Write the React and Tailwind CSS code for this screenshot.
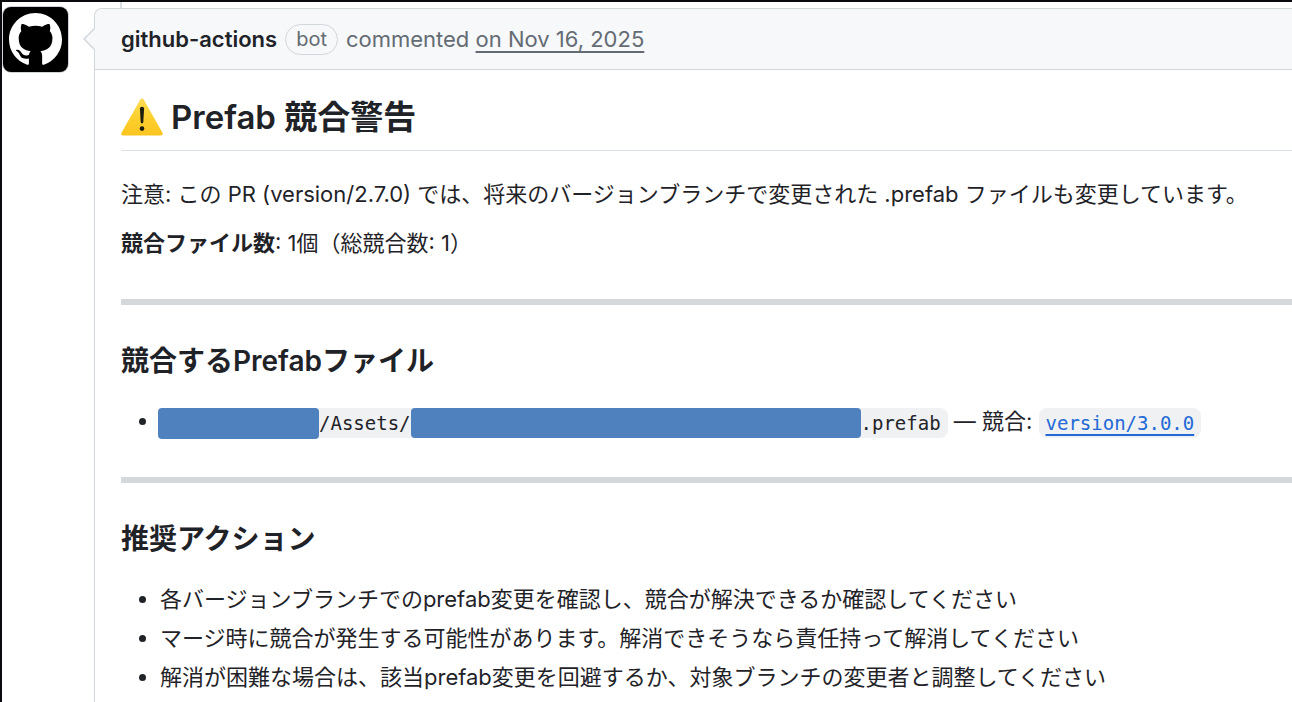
const actions = [
  '各バージョンブランチでのprefab変更を確認し、競合が解決できるか確認してください',
  'マージ時に競合が発生する可能性があります。解消できそうなら責任持って解消してください',
  '解消が困難な場合は、該当prefab変更を回避するか、対象ブランチの変更者と調整してください',
];

function Avatar() {
  return (
    <a
      href="#github-actions"
      aria-label="github-actions"
      className="mt-[5px] ml-px flex size-[65px] shrink-0 items-center justify-center rounded-lg bg-black shadow-[0_0_0_1px_#d1d5da]"
    >
      <svg viewBox="0 0 16 16" className="size-[53px] fill-white">
        <path d="M8 0C3.58 0 0 3.58 0 8c0 3.54 2.29 6.53 5.47 7.59.4.07.55-.17.55-.38 0-.19-.01-.82-.01-1.49-2.01.37-2.53-.49-2.69-.94-.09-.23-.48-.94-.82-1.13-.28-.15-.68-.52-.01-.53.63-.01 1.08.58 1.23.82.72 1.21 1.87.87 2.33.66.07-.52.28-.87.51-1.07-1.78-.2-3.64-.89-3.64-3.95 0-.87.31-1.59.82-2.15-.08-.2-.36-1.02.08-2.12 0 0 .67-.21 2.2.82.64-.18 1.32-.27 2-.27s1.36.09 2 .27c1.53-1.04 2.2-.82 2.2-.82.44 1.1.16 1.92.08 2.12.51.56.82 1.27.82 2.15 0 3.07-1.87 3.75-3.65 3.95.29.25.54.73.54 1.48 0 1.07-.01 1.93-.01 2.2 0 .21.15.46.55.38A8.01 8.01 0 0 0 16 8c0-4.42-3.58-8-8-8z" />
      </svg>
    </a>
  );
}

function WarningIcon() {
  return (
    <svg viewBox="0 0 42 38" className="h-[38px] w-[42px] shrink-0" role="img" aria-label="warning">
      <defs>
        <linearGradient id="warn" x1="0" y1="0" x2="0" y2="1">
          <stop offset="0" stopColor="#fbdc55" />
          <stop offset="0.5" stopColor="#fcd02f" />
          <stop offset="1" stopColor="#fcc521" />
        </linearGradient>
      </defs>
      <path
        d="M19.3 1.6Q21 -.6 22.7 1.6L41.5 34.8Q42.4 37.3 40 37.4H2Q-.4 37.3.5 34.8Z"
        fill="url(#warn)"
      />
      <path d="M18.9 10.6Q18.9 8.8 21 8.8T23.1 10.6L22.3 24Q22.2 25.4 21 25.4T19.7 24Z" fill="#1c1c10" />
      <circle cx="21" cy="30.6" r="2.3" fill="#1c1c10" />
    </svg>
  );
}

function Divider() {
  return <hr className="mt-[39px] h-1.5 border-0 bg-[#d5d8da]" />;
}

function SubHeading({ children }) {
  return <h3 className="mt-[39px] mb-[26px] text-[28px] leading-[35px] font-semibold">{children}</h3>;
}

export default function App() {
  return (
    <div className="min-h-screen overflow-hidden border-t-2 border-l-2 border-[#0b0b0f] bg-white font-['Inter','Noto_Sans_CJK_JP',sans-serif] text-[22px] leading-[33px] text-[#1f2328]">
      <div className="flex items-start">
        <Avatar />

        <div className="relative ml-[26px] min-w-0 flex-1 pt-1.5">
          {/* timeline line coming down into the comment */}
          <div className="absolute top-0 left-[26px] h-1.5 w-0.5 bg-[#d9dee3]" />

          <article className="min-h-screen rounded-tl-lg border-t border-l border-[#d1d7dc]">
            <header className="flex h-[61px] items-center rounded-tl-lg border-b border-[#d1d7dc] bg-[#f6f8fa] pl-[26px] whitespace-nowrap text-[#646b72]">
              <a href="#github-actions" className="font-semibold text-[#1f2328]">
                github-actions
              </a>
              <span className="mx-2 rounded-full border border-[#d1d7dc] px-2.5 text-[20px] leading-[29px]">
                bot
              </span>
              <span>
                commented{' '}
                <a href="#comment" className="underline decoration-2 underline-offset-4">
                  on Nov 16, 2025
                </a>
              </span>
            </header>

            <div className="pt-[26px] pl-[26px]">
              <h2 className="flex items-center gap-2 border-b border-[#dce1e6] pb-3 text-[33px] leading-[42px] font-semibold">
                <WarningIcon />
                Prefab 競合警告
              </h2>

              <p className="mt-[27px] whitespace-nowrap">
                注意: この PR (version/2.7.0) では、将来のバージョンブランチで変更された .prefab ファイルも変更しています。
              </p>
              <p className="mt-4">
                <strong className="font-semibold">競合ファイル数</strong>: 1個（総競合数: 1）
              </p>

              <Divider />

              <SubHeading>競合するPrefabファイル</SubHeading>
              <ul className="list-disc pl-[39px] whitespace-nowrap">
                <li className="h-[33px]">
                  <code className="-ml-0.5 inline-flex h-[30px] items-center rounded-lg bg-[#eff1f3] pr-[7px] align-middle font-['DejaVu_Sans_Mono',monospace] text-[19px]">
                    <span className="h-[31px] w-[161px] rounded-sm bg-[#4e81bd]" />
                    /Assets/
                    <span className="h-[30px] w-[450px] rounded-sm bg-[#4e81bd]" />
                    .prefab
                  </code>
                  {' — 競合: '}
                  <code className="inline-flex h-[30px] items-center rounded-lg bg-[#eff1f3] px-[7px] align-middle font-['DejaVu_Sans_Mono',monospace] text-[19px]">
                    <a href="#version-3.0.0" className="text-[#2369d6] underline decoration-2 underline-offset-4">
                      version/3.0.0
                    </a>
                  </code>
                </li>
              </ul>

              <Divider />

              <SubHeading>推奨アクション</SubHeading>
              <ul className="flex list-disc flex-col gap-1.5 pl-[39px] whitespace-nowrap">
                {actions.map((action) => (
                  <li key={action}>{action}</li>
                ))}
              </ul>
            </div>
          </article>

          {/* caret pointing at the avatar */}
          <svg viewBox="0 0 12 22" className="absolute top-[26px] -left-[11px] h-[22px] w-3">
            <path d="M12 0 1 11 12 22Z" fill="#f6f8fa" />
            <path d="M12 0 1 11 12 22" fill="none" stroke="#d1d7dc" strokeWidth="1.5" />
          </svg>
        </div>
      </div>
    </div>
  );
}
